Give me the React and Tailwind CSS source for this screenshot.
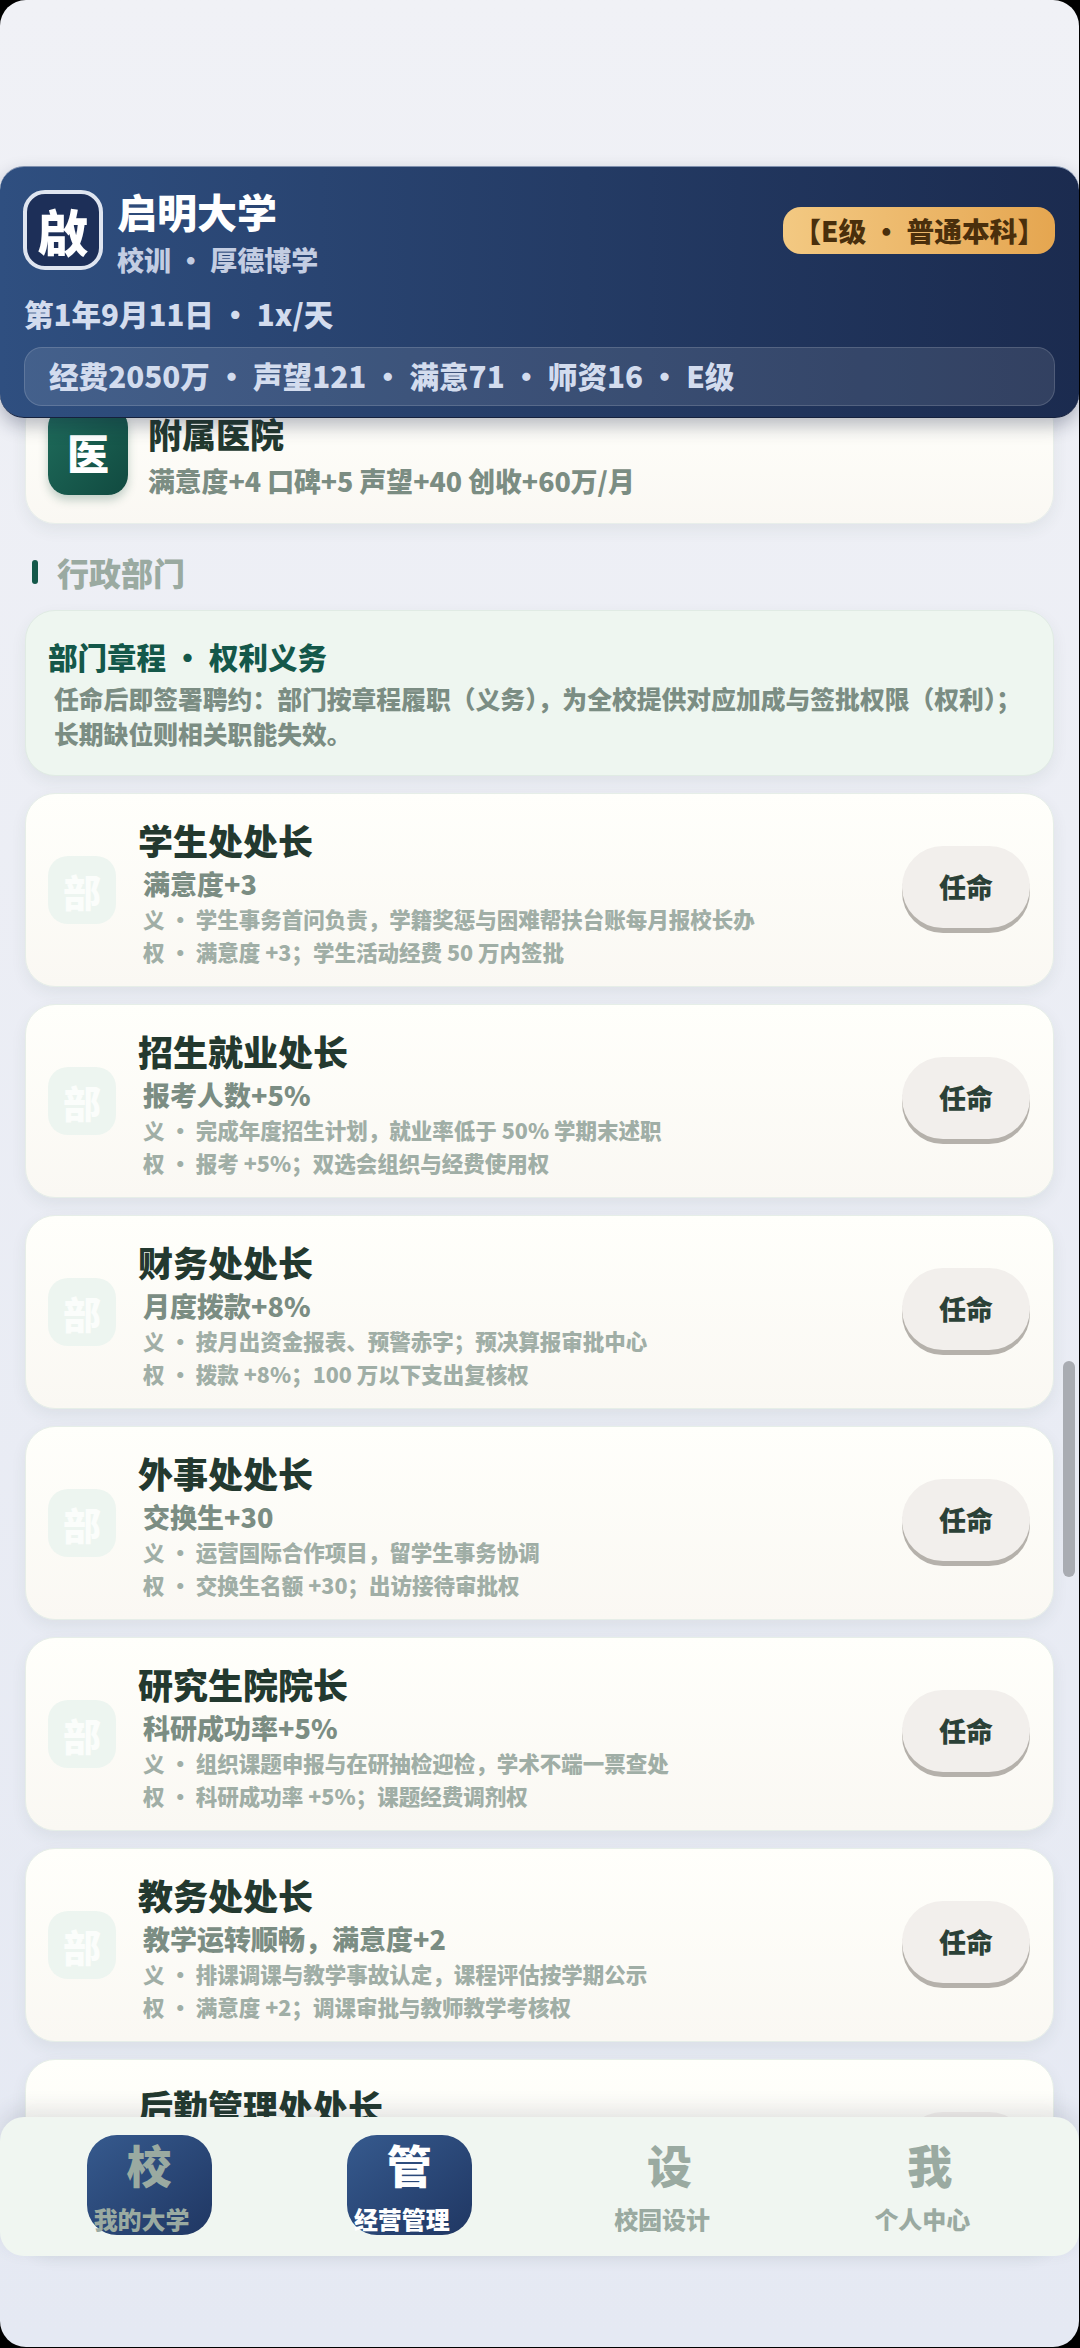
const cjk = "font-['Noto_Sans_CJK_SC','Noto_Sans',sans-serif]"

const departments = [
    { name: '学生处处长', effect: '满意度+3', duty: '义 · 学生事务首问负责，学籍奖惩与困难帮扶台账每月报校长办', right: '权 · 满意度 +3；学生活动经费 50 万内签批' },
    { name: '招生就业处长', effect: '报考人数+5%', duty: '义 · 完成年度招生计划，就业率低于 50% 学期末述职', right: '权 · 报考 +5%；双选会组织与经费使用权' },
    { name: '财务处处长', effect: '月度拨款+8%', duty: '义 · 按月出资金报表、预警赤字；预决算报审批中心', right: '权 · 拨款 +8%；100 万以下支出复核权' },
    { name: '外事处处长', effect: '交换生+30', duty: '义 · 运营国际合作项目，留学生事务协调', right: '权 · 交换生名额 +30；出访接待审批权' },
    { name: '研究生院院长', effect: '科研成功率+5%', duty: '义 · 组织课题申报与在研抽检迎检，学术不端一票查处', right: '权 · 科研成功率 +5%；课题经费调剂权' },
    { name: '教务处处长', effect: '教学运转顺畅，满意度+2', duty: '义 · 排课调课与教学事故认定，课程评估按学期公示', right: '权 · 满意度 +2；调课审批与教师教学考核权' },
    { name: '后勤管理处处长', effect: '', duty: '', right: '' },
]

const tabs = [
    { glyph: '校', label: '我的大学', pill: true },
    { glyph: '管', label: '经营管理', pill: true, active: true },
    { glyph: '设', label: '校园设计' },
    { glyph: '我', label: '个人中心' },
]

function DepartmentCard({ dept }) {
    return (
        <div className="h-[194px] shrink-0 rounded-[30px] border border-[#e6eee8] bg-gradient-to-b from-[#fffffb] to-[#faf8f3] shadow-[0_6px_16px_rgba(40,70,60,0.07)] pl-[22px] pr-[23px] flex items-center">
            <div className="w-[68px] h-[68px] rounded-[20px] bg-[#edf5f0] flex items-center justify-center text-[38px] font-black text-[#fbfdfb] shrink-0">部</div>
            <div className="ml-[22px] flex-1 min-w-0 h-[150px] pt-[3px]">
                <div className="text-[35px] leading-[44px] font-black text-[#23392f]">{dept.name}</div>
                <div className="ml-[5px] mt-[4px] h-[36px] text-[27px] leading-[36px] font-black text-[#7b8d83] whitespace-nowrap">{dept.effect}</div>
                <div className="ml-[5px] h-[33px] text-[21.5px] leading-[33px] font-black text-[#a0aea6] whitespace-nowrap">{dept.duty}</div>
                <div className="ml-[5px] h-[33px] text-[21.5px] leading-[33px] font-black text-[#a0aea6] whitespace-nowrap">{dept.right}</div>
            </div>
            <button className="w-[128px] h-[82px] mb-[6px] rounded-[41px] bg-[#f2efec] shadow-[0_5px_0_#b5b1ab] text-[27px] font-black text-[#2b4137] shrink-0">任命</button>
        </div>
    )
}

function App() {
    return (
        <div className="w-[1080px] h-[2348px] bg-black overflow-hidden">
            <div className={`${cjk} relative w-[1079px] h-[2347px] rounded-[26px] overflow-hidden flex flex-col bg-gradient-to-b from-[#f0f1f6] to-[#e5e9f3]`}>
                <div className="h-[166px] shrink-0"></div>

                <header className="relative z-10 h-[252px] shrink-0 rounded-[24px] border-t border-t-[#7f90ae] border-b border-b-[#15213d] bg-gradient-to-r from-[#2f4f80] to-[#1b2b4f] shadow-[0_8px_18px_rgba(20,30,60,0.3)] px-[24px] pt-[23px]">
                    <div className="flex items-start">
                        <div className="-ml-[1px] w-[80px] h-[80px] rounded-[22px] border-[4px] border-[#dfe5f0] bg-[#1d2f58] flex items-center justify-center text-[50px] font-black text-white">啟</div>
                        <div className="ml-[14px] -mt-[4px]">
                            <div className="text-[40px] leading-[50px] font-black text-white">启明大学</div>
                            <div className="mt-[6px] text-[27px] leading-[36px] font-black text-[#c3cde2]">校训 · 厚德博学</div>
                        </div>
                        <div className="ml-auto mt-[17px] h-[47px] px-[10px] rounded-[18px] bg-gradient-to-r from-[#f3c982] to-[#e5a650] flex items-center text-[27.7px] font-black text-[#4a2f0c]">【E级 · 普通本科】</div>
                    </div>
                    <div className="mt-[15px] text-[29.5px] leading-[40px] font-black text-[#d3dcee]">第1年9月11日 · 1x/天</div>
                    <div className="mt-[14px] h-[59px] rounded-[18px] border border-white/15 bg-white/10 px-[24px] flex items-center text-[29.6px] font-black text-[#d3dcee]">经费2050万 · 声望121 · 满意71 · 师资16 · E级</div>
                </header>

                <main className="flex-1 min-h-0 overflow-hidden px-[25px] flex flex-col">
                    <div className="-mt-[26px] h-[132px] shrink-0 rounded-[30px] border border-[#e8eeea] bg-gradient-to-b from-[#fffffb] to-[#faf8f3] shadow-[0_6px_16px_rgba(40,70,60,0.07)] pl-[22px] flex items-center">
                        <div className="w-[80px] h-[88px] -mt-[14px] rounded-[20px] bg-gradient-to-br from-[#1f6d5c] to-[#114a40] shadow-[0_5px_10px_rgba(20,80,60,0.25)] flex items-center justify-center text-[42px] font-black text-white">医</div>
                        <div className="ml-[20px] -mt-[4px]">
                            <div className="text-[34px] leading-[44px] font-black text-[#23392f]">附属医院</div>
                            <div className="mt-[6px] text-[26.8px] leading-[38px] font-black text-[#7b8d83]">满意度+4 口碑+5 声望+40 创收+60万/月</div>
                        </div>
                    </div>

                    <div className="mt-[27px] h-[42px] shrink-0 flex items-center">
                        <span className="ml-[7px] w-[6px] h-[24px] rounded-full bg-[#14584a]"></span>
                        <span className="ml-[19px] text-[32px] font-black text-[#9aaaa1]">行政部门</span>
                    </div>

                    <div className="mt-[17px] h-[166px] shrink-0 rounded-[30px] border border-[#e0ebe4] bg-[#eef6f0] shadow-[0_6px_16px_rgba(40,70,60,0.07)] px-[22px] pt-[25px]">
                        <div className="text-[29.5px] leading-[40px] font-black text-[#14584a]">部门章程 · 权利义务</div>
                        <div className="mt-[5px] ml-[6px] text-[24.8px] leading-[35px] font-black text-[#7b8d83] whitespace-nowrap">任命后即签署聘约：部门按章程履职（义务），为全校提供对应加成与签批权限（权利）；<br />长期缺位则相关职能失效。</div>
                    </div>

                    <div className="mt-[17px] flex flex-col gap-[17px]">
                        {departments.map((dept) => (
                            <DepartmentCard key={dept.name} dept={dept} />
                        ))}
                    </div>
                </main>

                <div className="absolute left-[1063px] top-[1361px] w-[12px] h-[216px] rounded-full bg-[#a9acb2]"></div>

                <nav className="absolute left-0 right-0 top-[2117px] h-[139px] rounded-[24px] bg-[#f0f6f1] shadow-[0_-8px_20px_rgba(40,50,70,0.12)] px-[19px] pt-[18px] grid grid-cols-4">
                    {tabs.map((tab) => (
                        <div key={tab.label} className="relative flex flex-col items-center">
                            {tab.pill && <div className="absolute top-0 left-[68px] w-[125px] h-[100px] rounded-[30px] bg-gradient-to-br from-[#365a8e] to-[#203763]"></div>}
                            <div className={`relative text-[45px] leading-[60px] font-black ${tab.active ? 'text-white' : 'text-[#9aaaa1]'}`}>{tab.glyph}</div>
                            <div className={`relative mr-[15px] mt-[8px] text-[24px] leading-[32px] font-black ${tab.active ? 'text-white' : 'text-[#9aaaa1]'}`}>{tab.label}</div>
                        </div>
                    ))}
                </nav>
            </div>
        </div>
    )
}

export default App
